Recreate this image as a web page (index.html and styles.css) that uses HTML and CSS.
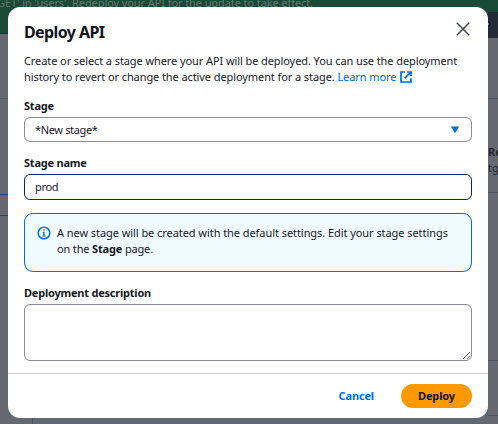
FILE: index.html
```html
<!DOCTYPE html>
<html lang="en">
<head>
<meta charset="utf-8">
<title>Deploy API</title>
<link rel="stylesheet" href="styles.css">
</head>
<body>
<div class="page">
  <div class="flash">GET' in 'users'. Redeploy your API for the update to take effect.</div>
  <div class="behind">
    <div class="rail-left">
      <div class="green-end"></div>
      <div class="block a"></div>
      <div class="block b"></div>
      <div class="block c"></div>
    </div>
    <div class="floor"><div class="floor-nav"></div></div>
    <div class="rail-right">
      <div class="navy"><span class="dot"></span></div>
      <div class="cell d"></div>
      <div class="cell e"><b>Re</b><span>tg</span></div>
      <div class="cell f"></div>
      <div class="cell g"></div>
    </div>
  </div>
</div>
<div class="dialog" role="dialog" aria-labelledby="title">
  <header class="header">
    <h1 id="title">Deploy API</h1>
    <button class="close" aria-label="Close">
      <svg width="14" height="14" viewBox="0 0 14 14"><path d="M.8.8l12.4 12.4M13.2.8L.8 13.2" fill="none" stroke="#424650" stroke-width="1.5"/></svg>
    </button>
  </header>
  <main class="content">
    <p class="intro"><span class="line l1">Create or select a stage where your API will be deployed. You can use the deployment</span>
      <span class="line l2">history to revert or change the active deployment for a stage. <a>Learn more</a></span><svg class="ext" width="12" height="12" viewBox="0 0 12 12"><path d="M5 1H1v10h10V7.2M7 1h4v4M11 1L4.8 7.2" fill="none" stroke="#006ce0" stroke-width="1.7"/></svg></p>
    <label class="label stage">Stage</label>
    <div class="select"><span>*New stage*</span><svg width="10" height="8" viewBox="0 0 10 8"><path d="M.8.5h8.4L5 7.2z" fill="#006ce0"/></svg></div>
    <label class="label name">Stage name</label>
    <div class="input"><span>prod</span></div>
    <div class="alert">
      <svg width="14" height="14" viewBox="0 0 14 14" fill="none" stroke="#006ce0" stroke-width="1.5"><circle cx="7" cy="7" r="5.8"/><path d="M7 3.3v1.5M5.8 6.3H7v3.4M5.6 9.8h2.8" stroke-width="1.3"/></svg>
      <p><span class="line i1">A new stage will be created with the default settings. Edit your stage settings</span>
      <span class="line i2">on the <b>Stage</b> page.</span></p>
    </div>
    <label class="label desc">Deployment description</label>
    <textarea aria-label="Deployment description"></textarea>
  </main>
  <footer class="footer">
    <button class="cancel">Cancel</button>
    <button class="deploy">Deploy</button>
  </footer>
</div>
</body>
</html>
```
FILE: styles.css
```css
* { box-sizing: border-box; }
body {
  margin: 0;
  width: 498px;
  height: 424px;
  overflow: hidden;
  position: relative;
  font: 11px/16px "Noto Sans", "Open Sans", sans-serif;
  color: #16191f;
}
.page { height: 424px; background: #656871; display: flex; flex-direction: column; }
.flash {
  height: 12px;
  flex: none;
  background: #1b4937;
  color: #647970;
  line-height: 6px;
  white-space: nowrap;
  text-indent: -3px;
  letter-spacing: -.09px;
}
.behind { flex: 1; display: grid; grid-template-columns: 8px 1fr 10px; }
.green-end { height: 22px; background: #1b4937; border-bottom: 1px solid #163e30; }
.block.a { height: 65px; border-bottom: 1px solid #555963; }
.block.b { height: 96px; border-bottom: 1px solid #1c4674; }
.block.c { height: 21px; border-bottom: 1px solid #1c4674; }
.floor { display: flex; align-items: flex-end; background: linear-gradient(#1b4937 26px, #616872 26px); }
.floor-nav { width: 25px; height: 6px; background: #656871; border-right: 1px solid #50545f; }
.navy { height: 26px; background: #232b37; padding: 11px 0 0; }
.dot { display: block; width: 1px; height: 2px; background: #69717c; }
.cell { border-bottom: 1px solid #50545e; }
.cell.d { height: 61px; }
.cell.e { height: 94px; padding-top: 45px; display: flex; flex-direction: column; color: #242832; }
.cell.f { height: 168px; }
.cell.g { height: 55px; }
.dialog {
  position: absolute;
  left: 8px;
  top: 7px;
  width: 480px;
  height: 411px;
  border-radius: 12px;
  background: #fff;
  display: flex;
  flex-direction: column;
}
.header { display: flex; justify-content: space-between; padding: 14px 17px 0 16px; height: 46px; }
h1 { margin: -1px 0 0; font-size: 16px; line-height: 24px; font-weight: 700; letter-spacing: -.6px; color: #0f141a; }
button { border: 0; background: none; padding: 0; font: inherit; letter-spacing: -.15px; }
.close { width: 16px; height: 16px; display: flex; align-items: center; justify-content: center; }
.content { padding: 0 16px; flex: 1; display: flex; flex-direction: column; }
p { margin: 0; }
.line { white-space: nowrap; }
.intro { height: 32px; white-space: nowrap; letter-spacing: -.088px; }
.l1, .i1 { display: block; }
a { color: #006ce0; }
.ext { margin-left: 4px; vertical-align: -2px; }
.label { font-weight: 700; height: 16px; line-height: 16px; letter-spacing: -.22px; }
.stage { margin-top: 13px; }
.select, .input { border: 1px solid #8c8c94; border-radius: 6px; display: flex; align-items: center; padding: 0 10px; letter-spacing: -.35px; }
.select { height: 25px; margin-top: 3px; justify-content: space-between; padding-right: 11px; }
.name { margin-top: 13px; }
.input { height: 26px; margin-top: 3px; border-color: #002b66; }
.alert { margin-top: 13px; height: 59px; border: 1px solid #006ce0; border-radius: 9px; background: #f0fbff; display: flex; gap: 6px; padding: 11px 12px; }
.alert svg { flex: none; margin-top: 1px; }
.i1 { letter-spacing: -.06px; }
.i2 { letter-spacing: -.16px; }
.desc { margin-top: 13px; }
textarea { width: 448px; height: 57px; margin-top: 3px; border: 1px solid #8c8c94; border-radius: 6px; background: #fff; }
.footer { height: 45px; border-top: 1px solid #c6c6cd; display: flex; justify-content: flex-end; align-items: center; gap: 27px; padding-right: 16px; font-weight: 700; }
.cancel { color: #006ce0; }
.deploy { width: 71px; height: 24px; border-radius: 12px; background: #ff9900; color: #0f141a; }
```
